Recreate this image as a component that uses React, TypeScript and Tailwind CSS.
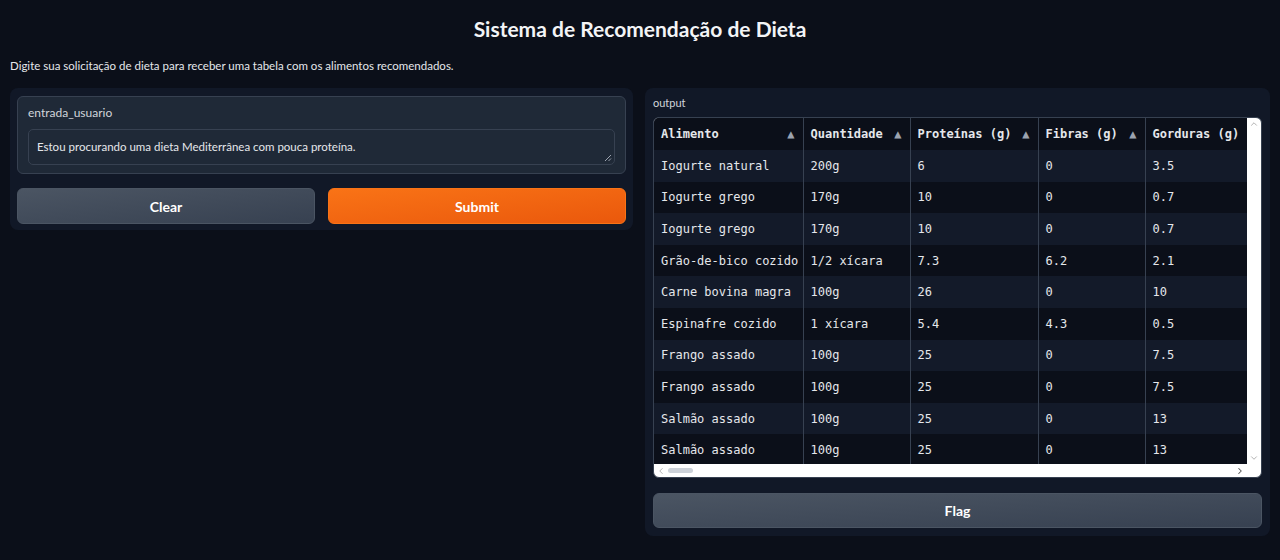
import { ChevronDown, ChevronLeft, ChevronRight, ChevronUp } from "lucide-react";

const columns = [
	{ name: "Alimento", width: "w-[149px]" },
	{ name: "Quantidade", width: "w-[107px]" },
	{ name: "Proteínas (g)", width: "w-[128px]" },
	{ name: "Fibras (g)", width: "w-[107px]" },
	{ name: "Gorduras (g)", width: "w-[140px]" },
];

const rows = [
	["Iogurte natural", "200g", "6", "0", "3.5"],
	["Iogurte grego", "170g", "10", "0", "0.7"],
	["Iogurte grego", "170g", "10", "0", "0.7"],
	["Grão-de-bico cozido", "1/2 xícara", "7.3", "6.2", "2.1"],
	["Carne bovina magra", "100g", "26", "0", "10"],
	["Espinafre cozido", "1 xícara", "5.4", "4.3", "0.5"],
	["Frango assado", "100g", "25", "0", "7.5"],
	["Frango assado", "100g", "25", "0", "7.5"],
	["Salmão assado", "100g", "25", "0", "13"],
	["Salmão assado", "100g", "25", "0", "13"],
];

function OutputTable() {
	return (
		<div className="flex h-[361px] w-full flex-col overflow-hidden rounded-[6px] border border-[#374151] bg-white">
			<div className="flex min-h-0 flex-1">
				<div className="min-w-0 flex-1 overflow-hidden bg-[#0b0f19]">
					<table className="w-[631px] table-fixed border-collapse font-['DejaVu_Sans_Mono',monospace] text-[12px] text-[#e5e7eb]">
						<colgroup>
							{columns.map((c) => (
								<col key={c.name} className={c.width} />
							))}
						</colgroup>
						<thead>
							<tr className="h-[32px] bg-[#0b0f19]">
								{columns.map((c, i) => (
									<th
										key={c.name}
										className={`overflow-hidden p-0 text-left font-bold ${i > 0 ? "border-l border-[#374151]" : ""}`}
									>
										<div className="flex items-center justify-between whitespace-nowrap pl-[7px] pr-[8px]">
											<span>{c.name}</span>
											{/* the last column's arrow sits past the visible edge */}
											{i < columns.length - 1 && (
												<span className="text-[12px] leading-none text-[#9ca3af]">▲</span>
											)}
										</div>
									</th>
								))}
							</tr>
						</thead>
						<tbody>
							{rows.map((r, ri) => (
								<tr
									key={ri}
									className={`h-[31.6px] ${ri % 2 === 0 ? "bg-[#131a29]" : "bg-[#0b0f19]"}`}
								>
									{r.map((v, i) => (
										<td
											key={i}
											className={`overflow-hidden whitespace-nowrap px-[7px] py-0 ${i > 0 ? "border-l border-[#374151]" : ""}`}
										>
											{v}
										</td>
									))}
								</tr>
							))}
						</tbody>
					</table>
				</div>
				<div className="flex w-[14px] shrink-0 flex-col items-center justify-between py-[1px]">
					<ChevronUp className="size-[10px] text-[#a3a3a3]" strokeWidth={2} />
					<ChevronDown className="size-[10px] text-[#a3a3a3]" strokeWidth={2} />
				</div>
			</div>
			<div className="flex h-[13px] items-center pl-[2px] pr-[16px]">
				<ChevronLeft className="size-[10px] text-[#a3a3a3]" strokeWidth={2} />
				<div className="ml-[2px] h-[5px] w-[25px] rounded-full bg-[#cdd2d9]" />
				<div className="flex-1" />
				<ChevronRight className="size-[10px] text-[#555]" strokeWidth={2.5} />
			</div>
		</div>
	);
}

export default function App() {
	return (
		<div className="min-h-screen bg-[#0b0f19] px-[10px] font-['Lato',sans-serif] text-[#f3f4f6]">
			<h1 className="pt-[14px] text-center text-[21px] font-bold leading-[30px]">
				Sistema de Recomendação de Dieta
			</h1>
			<p className="mt-[14px] text-[11.5px] leading-[16px] text-[#e5e7eb]">
				Digite sua solicitação de dieta para receber uma tabela com os alimentos recomendados.
			</p>
			<div className="mt-[14px] grid grid-cols-[623px_minmax(0,1fr)] items-start gap-[12px]">
				<div className="rounded-[8px] bg-[#111827] px-[7px] pb-[6px] pt-[8px]">
					<div className="rounded-[6px] border border-[#374151] bg-[#1f2937] px-[10px] pb-[8px] pt-[8px]">
						<div className="text-[12px] leading-[16px] text-[#d1d5db]">entrada_usuario</div>
						<div className="relative mt-[8px] flex h-[36px] items-center rounded-[5px] border border-[#374151] bg-[#1f2937] px-[8px] text-[11.5px] text-[#e5e7eb]">
							Estou procurando uma dieta Mediterrânea com pouca proteína.
							<svg
								className="absolute bottom-[2px] right-[2px]"
								width="8"
								height="8"
								viewBox="0 0 8 8"
							>
								<path d="M7 1L1 7M7 4.5L4.5 7" stroke="#9ca3af" strokeWidth="1" />
							</svg>
						</div>
					</div>
					<div className="mt-[14px] grid grid-cols-2 gap-[13px]">
						<button className="h-[36px] rounded-[6px] border border-[#4b5563] bg-linear-to-br from-[#4b5563] to-[#374151] text-[14px] font-bold text-white">
							Clear
						</button>
						<button className="h-[36px] rounded-[6px] border border-[#f97316] bg-linear-to-br from-[#f97316] to-[#ea580c] text-[14px] font-bold text-white">
							Submit
						</button>
					</div>
				</div>
				<div className="min-w-0 rounded-[8px] bg-[#111827] px-[8px] pb-[8px] pt-[8px]">
					<div className="text-[11px] leading-[14px] text-[#d1d5db]">output</div>
					<div className="mt-[7px]">
						<OutputTable />
					</div>
					<button className="mt-[15px] h-[35px] w-full rounded-[6px] border border-[#4b5563] bg-linear-to-br from-[#4b5563] to-[#374151] text-[14px] font-bold text-white">
						Flag
					</button>
				</div>
			</div>
		</div>
	);
}
